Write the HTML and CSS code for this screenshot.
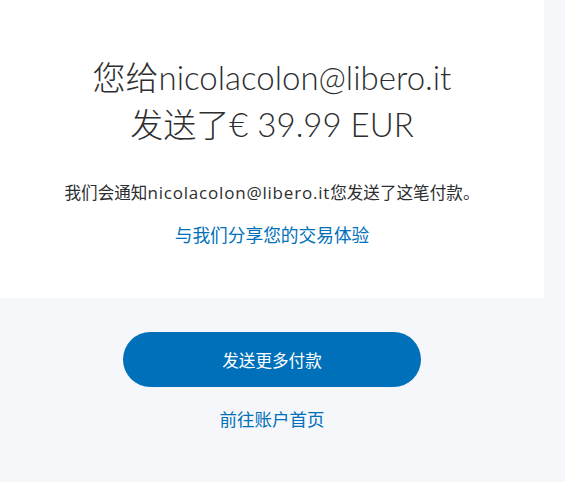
FILE: index.html
```html
<!DOCTYPE html>
<html lang="zh-CN">
<head>
    <meta charset="UTF-8">
    <meta name="viewport" content="width=device-width, initial-scale=1.0">
    <title>付款已发送</title>
    <link rel="stylesheet" href="styles.css">
</head>
<body>
    <div class="page">
        <div class="card">
            <h1 class="title">您给nicolacolon@libero.it<br>发送了<span class="amount">€ 39.99 EUR</span></h1>
            <p class="notice">我们会通知<span class="email">nicolacolon@libero.it</span>您发送了这笔付款。</p>
            <a class="link share" href="#">与我们分享您的交易体验</a>
        </div>
        <div class="actions">
            <button class="btn-primary">发送更多付款</button>
            <a class="link home" href="#">前往账户首页</a>
        </div>
    </div>
</body>
</html>
```

FILE: styles.css
```css
* {
    box-sizing: border-box;
    margin: 0;
    padding: 0;
}

body {
    font-family: "Open Sans", "Noto Sans CJK SC", sans-serif;
    background: #f5f7fa;
    color: #2c2e2f;
}

.page {
    width: 544px;
}

.card {
    background: #fff;
    height: 298px;
    padding-top: 54px;
    text-align: center;
}

.title {
    font-family: Lato, "Noto Sans CJK SC", sans-serif;
    font-size: 33px;
    font-weight: 300;
    line-height: 47px;
}

.notice {
    margin-top: 34px;
    font-size: 16.6px;
    line-height: 22px;
}

.email {
    font-size: 17px;
    letter-spacing: 0.8px;
}

.link {
    display: inline-block;
    color: #0070ba;
    text-decoration: none;
    font-size: 17.7px;
    line-height: 24px;
}

.share {
    margin-top: 19px;
}

.actions {
    display: flex;
    flex-direction: column;
    align-items: center;
    padding-top: 34px;
}

.btn-primary {
    width: 298px;
    height: 55px;
    border: none;
    border-radius: 28px;
    background: #0070ba;
    color: #fff;
    font-family: inherit;
    font-size: 16.6px;
}

.home {
    margin-top: 20px;
    font-size: 17.5px;
}
```
